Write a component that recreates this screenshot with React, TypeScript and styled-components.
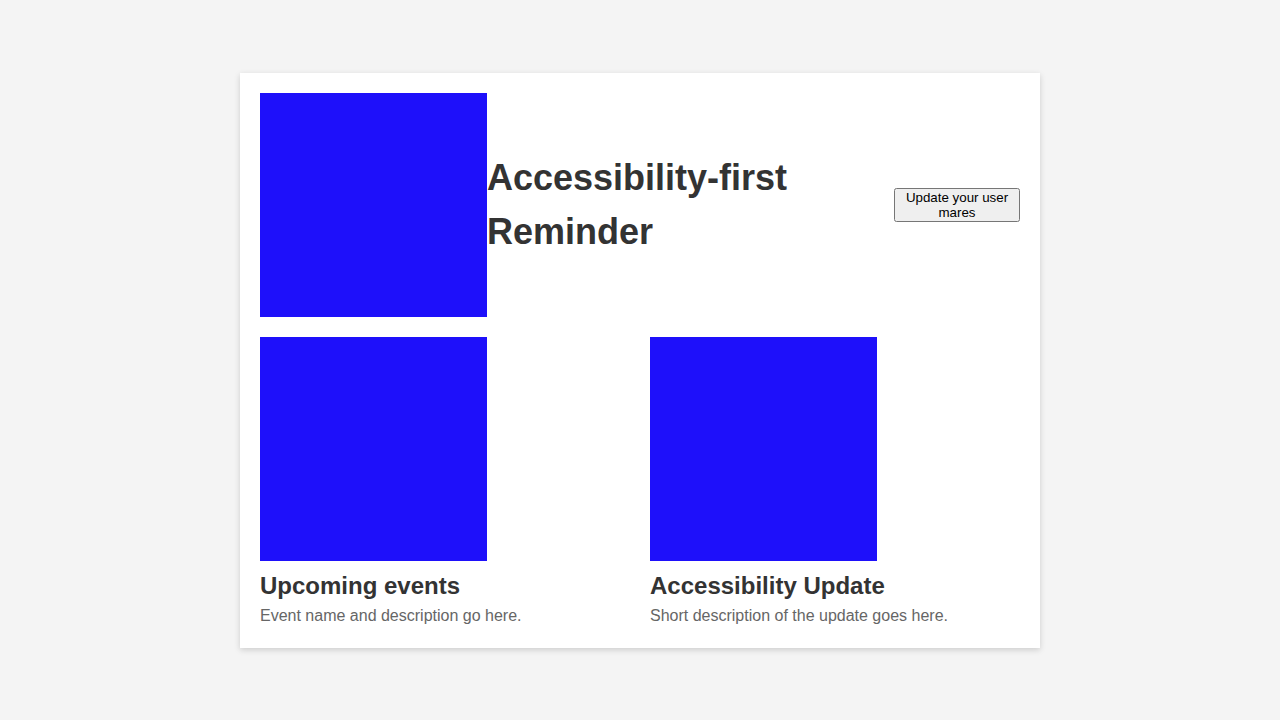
import React from 'react'
import styled, { createGlobalStyle } from 'styled-components'

const GlobalStyle = createGlobalStyle`
  html, body {
    margin: 0;
    padding: 0;
    background: #f4f4f4;
    font-family: "Liberation Sans", Arial, sans-serif;
  }
`

const Page = styled('main')`
  align-items: center;
  display: flex;
  justify-content: center;
  min-height: 100vh;
  width: 100%;
`

const Card = styled('section')`
  background: #fff;
  box-shadow: 0 2px 6px rgba(0, 0, 0, 0.16);
  box-sizing: border-box;
  padding: 20px;
  width: 800px;
`

const Header = styled('header')`
  align-items: center;
  display: flex;
  margin-bottom: 20px;
`

const Picture = styled('div')`
  background: #1e10fa;
  flex-shrink: 0;
  height: 224px;
  width: 227px;
`

const Title = styled('h1')`
  color: #333;
  flex: 1;
  font-size: 36px;
  font-weight: 700;
  line-height: 1.5;
  margin: 0;
  padding-right: 100px;
`

const UpdateButton = styled('button')`
  font-family: "Liberation Sans", Arial, sans-serif;
  font-size: 13.33px;
  flex-shrink: 0;
  line-height: 15px;
  padding: 0 6px;
  width: 126px;
`

const Grid = styled('div')`
  display: grid;
  gap: 20px;
  grid-template-columns: 1fr 1fr;
`

const Item = styled('article')`
  display: flex;
  flex-direction: column;
`

const ItemTitle = styled('h2')`
  color: #333;
  font-size: 24px;
  font-weight: 700;
  line-height: 29px;
  margin: 10px 0 4px;
`

const ItemText = styled('p')`
  color: #666;
  font-size: 16px;
  line-height: 24px;
  margin: 0;
`

const items = [
  { title: 'Upcoming events', text: 'Event name and description go here.' },
  { title: 'Accessibility Update', text: 'Short description of the update goes here.' },
]

export default function App() {
  return (
    <>
      <GlobalStyle />
      <Page>
        <Card>
          <Header>
            <Picture />
            <Title>Accessibility-first Reminder</Title>
            <UpdateButton>Update your user mares</UpdateButton>
          </Header>
          <Grid>
            {items.map((item) => (
              <Item key={item.title}>
                <Picture />
                <ItemTitle>{item.title}</ItemTitle>
                <ItemText>{item.text}</ItemText>
              </Item>
            ))}
          </Grid>
        </Card>
      </Page>
    </>
  )
}
